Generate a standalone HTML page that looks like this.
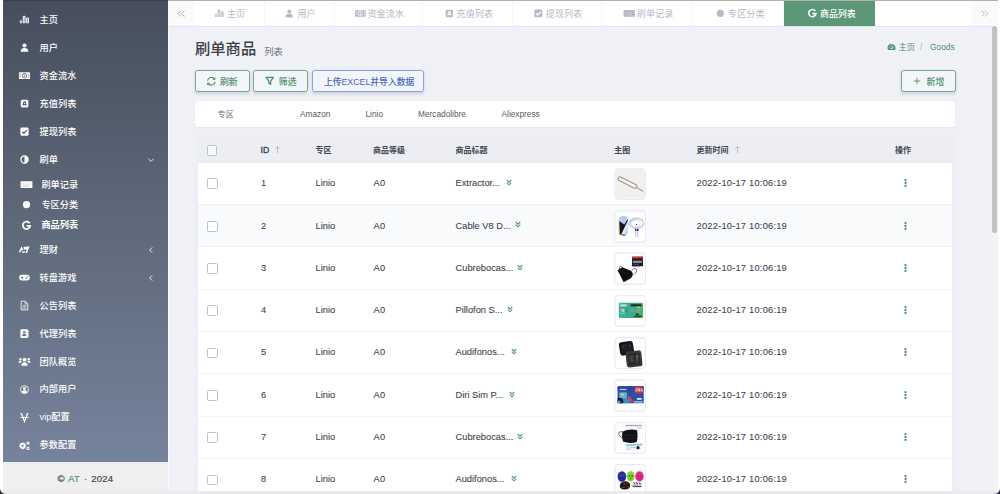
<!DOCTYPE html>
<html lang="zh-CN">
<head>
<meta charset="utf-8">
<title>刷单商品</title>
<style>
*{box-sizing:border-box;margin:0;padding:0}
html,body{width:1000px;height:494px;overflow:hidden;background:#fff}
body{position:relative;font-family:"Liberation Sans","Noto Sans CJK SC",sans-serif;font-size:8.9px;color:#414750}
svg{display:block}
i{font-style:normal;display:block}
#pagebg{position:absolute;left:168px;top:26px;width:823px;height:465px;background:#eff1f7}
#topl{position:absolute;left:3px;top:0;width:995px;height:1px;background:rgba(40,40,40,.36)}
#cbl{position:absolute;left:0;top:489px;width:5px;height:5px;background:radial-gradient(circle at 100% 0,rgba(40,30,25,0) 4.3px,#2b211c 5.2px)}
#cbr{position:absolute;left:995px;top:489px;width:5px;height:5px;background:radial-gradient(circle at 0 0,rgba(30,25,60,0) 4.3px,#241d4a 5.2px)}
/* sidebar */
#side{position:absolute;left:3px;top:0;width:165px;height:462.4px;background:linear-gradient(180deg,#464e5c 0%,#606b7c 53%,#76839c 100%)}
#side .it{position:absolute;left:0;width:165px;height:20px;color:#fff;font-size:9.2px;line-height:21px;font-weight:500}
#side .it .ic{position:absolute;left:15px;top:4.4px;width:13px;height:12px}
#side .it .tx{position:absolute;left:36.6px;top:0;white-space:nowrap}
#side .it.sub .tx{left:38.4px}
#side .it.sub .ic{left:17px}
#side .it.act .tx{font-weight:bold}
#side .it .ar{position:absolute;left:144.2px;top:6px;width:8px;height:8px}
#foot{position:absolute;left:3px;top:462.4px;width:165px;height:28.6px;background:#efefef;line-height:33.6px;font-size:9.6px;color:#4a4a4a;letter-spacing:.3px;-webkit-text-stroke:.2px}
#foot span,#foot b{position:absolute;top:0;white-space:nowrap}
#foot b{font-weight:normal;color:#4e9876}
/* tabs */
#tabs{position:absolute;left:168px;top:1px;width:830px;height:25.5px;background:#fff;border-bottom:1px solid #e4e6ec}
#tabs .tb{position:absolute;top:0;height:24.5px;border-right:1px solid #f5f6f8;color:#b4bac6;font-size:9.1px;line-height:26.4px;padding-left:1px;text-align:center;white-space:nowrap}
#tabs .tb svg{display:inline-block;vertical-align:-2.2px;margin-right:1.5px}
#tabs .tb.on{background:#5b9777;color:#fff;border-right:none;font-weight:500;font-size:8.9px;height:25.3px}
#tabs .nav{position:absolute;top:0;width:25.5px;height:24.5px;background:#fafafa}
#edge{position:absolute;left:168px;top:26px;width:1.4px;height:465px;background:rgba(255,255,255,.55)}
/* scroll */
#sbar{position:absolute;left:991px;top:26px;width:7px;height:465px;background:#f3f4f7}
#sbar i{position:absolute;left:.6px;top:0;width:5.8px;height:207px;border-radius:3px;background:#c2c2c2}
#botm{position:absolute;left:0;top:491px;width:1000px;height:3px;background:#ebebee}
/* content */
h1{position:absolute;left:195px;top:38.5px;font-size:15.3px;font-weight:500;color:#3b3f45;line-height:20px;white-space:nowrap}
h1 small{font-size:9.4px;color:#6c717a;margin-left:8px;font-weight:normal;position:relative;top:1px}
.bc{position:absolute;left:887px;top:40.5px;height:12px;width:80px;font-size:8.4px;line-height:12px;white-space:nowrap}
.bc svg{position:absolute;left:0;top:2px}
.bc span{position:absolute;top:0}
.bc .a{left:11.5px;color:#4e8f6f}
.bc .s{left:33px;color:#a8adb8}
.bc .g{left:43px;color:#4e8f6f}
.btn{position:absolute;top:70px;height:22px;border:1.15px solid #72a88c;border-radius:2.8px;background:#f4f5f8;color:#4e8f6f;font-size:8.9px;font-weight:500;line-height:19.8px;white-space:nowrap;box-shadow:0 1.5px 3px rgba(60,70,90,.18)}
.btn i{position:absolute}
.btn span{position:absolute;top:2.1px}
.btn.blue{border-color:#86a3e8;color:#3f66c8}
#filt{position:absolute;left:195px;top:100.5px;width:760px;height:26px;background:#fff;border-radius:2.5px;box-shadow:0 .5px 2px rgba(80,90,120,.06);font-size:8.3px;color:#555a62;line-height:26px}
#filt span{position:absolute;top:0;white-space:nowrap}
#card{position:absolute;left:195px;top:136.2px;width:760px;height:354.8px;background:#edeef3;border-radius:3px 3px 0 0;overflow:hidden}
#card .hd{position:absolute;left:0;top:0;width:760px;height:26.8px;font-weight:bold;font-size:8px;color:#414750;line-height:29.6px;background:#edeef3;z-index:2}
#card .hd span{position:absolute;top:0;white-space:nowrap}
#card .hd .up{position:absolute;top:9.2px}
.cb{position:absolute;width:10.8px;height:10.8px;border:1px solid #b9c3cd;border-radius:1.5px;background:#fff}
.row{position:absolute;left:3px;width:754px;height:42.3px;background:#fff;border-top:1px solid #f2f3f7;font-size:9.3px;color:#3f454e;line-height:41.6px;-webkit-text-stroke:.1px #3f454e}
.row.alt{background:#f9fafc}
.row span{position:absolute;top:0;white-space:nowrap}
.row .dt{letter-spacing:.22px}
.row .th{position:absolute;left:416.2px;top:5px;width:32px;height:32.4px;border:1.7px solid #e8ebf4;border-radius:4px;background:#f3f5fa;padding:.5px;overflow:hidden}
.row .th svg{width:100%;height:100%;border-radius:2.4px}
.row .dots{position:absolute;left:705.6px;top:15.4px;width:3px;height:10px}
.row .chev{position:absolute;top:16.3px;width:6px;height:7px}

</style>
</head>
<body>
<div id="pagebg"></div><div id="edge"></div>
<div id="side">
<div class="it " style="top:9.8px"><span class="ic"><svg width="13" height="11.14" viewBox="0 0 14 12" style=""><g fill="#fff"><rect x="2" y="6.7" width="2.3" height="3.4" rx="1"/><rect x="5.1" y="1.8" width="3" height="8.3" rx="1.3"/><rect x="8.8" y="3.7" width="3" height="6.4" rx="1.3"/></g><path d="M3.15 7.9v1.1M6.6 3.3v5.6M10.3 5.2v3.7" stroke="#474f5f" stroke-width=".75" stroke-linecap="round" opacity=".85"/></svg></span><span class="tx">主页</span></div>
<div class="it " style="top:37.8px"><span class="ic"><svg width="13" height="11.14" viewBox="0 0 14 12" style=""><circle cx="7" cy="3.8" r="2.2" fill="#fff"/><path d="M2.9 10.6c0-3 1.6-4.1 4.1-4.1s4.1 1.1 4.1 4.1z" fill="#fff"/></svg></span><span class="tx">用户</span></div>
<div class="it " style="top:65.8px"><span class="ic"><svg width="13" height="11.14" viewBox="0 0 14 12" style=""><rect x="1" y="2.5" width="12" height="7.2" rx=".9" fill="#fff"/><ellipse cx="7" cy="6.1" rx="2.3" ry="2.5" fill="none" stroke="#4d5668" stroke-width=".9"/><rect x="6.65" y="4.9" width=".7" height="2.4" fill="#4d5668"/><path d="M2.3 3.7v4.8M11.7 3.7v4.8" stroke="#4d5668" stroke-width=".5"/></svg></span><span class="tx">资金流水</span></div>
<div class="it " style="top:93.7px"><span class="ic"><svg width="13" height="11.14" viewBox="0 0 14 12" style=""><rect x="3" y="2" width="8.2" height="8.2" rx="1.5" fill="#fff"/><path d="M5.3 8.3 6.5 4.2h1.2L8.9 8.3M5.9 7.1h2.4" fill="none" stroke="#4f586a" stroke-width="1.15"/></svg></span><span class="tx">充值列表</span></div>
<div class="it " style="top:121.8px"><span class="ic"><svg width="13" height="11.14" viewBox="0 0 14 12" style=""><rect x="2.6" y="1.6" width="8.8" height="8.8" rx="1.5" fill="#fff"/><path d="M4.6 6.1 6.3 7.8 9.5 4.4" fill="none" stroke="#535c6f" stroke-width="1.4"/></svg></span><span class="tx">提现列表</span></div>
<div class="it " style="top:149.8px"><span class="ic"><svg width="13" height="11.14" viewBox="0 0 14 12" style=""><circle cx="7" cy="6" r="3.9" fill="none" stroke="#fff" stroke-width="1.3"/><path d="M7 2.1a3.9 3.9 0 0 1 0 7.8z" fill="#fff"/></svg></span><span class="tx">刷单</span><span class="ar"><svg width="8" height="8" viewBox="0 0 8 8" style=""><path d="M1.4 2.8 4 5.4 6.6 2.8" fill="none" stroke="#e9ecf1" stroke-width="1"/></svg></span></div>
<div class="it sub" style="top:174.6px"><span class="ic"><svg width="13" height="11.14" viewBox="0 0 14 12" style=""><rect x=".6" y="2.3" width="12.8" height="7.4" rx=".8" fill="#fff"/><path d="M2 4.7h10M2 6.1h10" stroke="#5a6478" stroke-width=".4" stroke-dasharray="1.1 .6" opacity=".55"/><path d="M3.6 7.8h6.8" stroke="#5a6478" stroke-width=".5" opacity=".6"/></svg></span><span class="tx">刷单记录</span></div>
<div class="it sub" style="top:194.9px"><span class="ic"><svg width="13" height="11.14" viewBox="0 0 14 12" style=""><circle cx="7" cy="6" r="3.95" fill="#fff"/></svg></span><span class="tx">专区分类</span></div>
<div class="it sub act" style="top:215.4px"><span class="ic"><svg width="13" height="11.14" viewBox="0 0 14 12" style=""><path d="M10.4 3.5A4 4 0 1 0 11 6.3H7.2" fill="none" stroke="#fff" stroke-width="1.8"/></svg></span><span class="tx">商品列表</span></div>
<div class="it " style="top:239.8px"><span class="ic"><svg width="13" height="11.14" viewBox="0 0 14 12" style=""><path d="M.8 8.8 3.7 2.4 6 6.6 3.4 7.1 2.6 8.9z" fill="#fff"/><path d="M5.8 3.3l6.7-.9-2.8 7.5-1.7-.6 1.5-3.5-3 .5z" fill="#fff"/><path d="M4.4 8.1l3.2-.4.3 1.6-3 .3z" fill="#fff"/></svg></span><span class="tx">理财</span><span class="ar"><svg width="8" height="8" viewBox="0 0 8 8" style=""><path d="M5.2 1.4 2.6 4 5.2 6.6" fill="none" stroke="#e9ecf1" stroke-width="1"/></svg></span></div>
<div class="it " style="top:267.8px"><span class="ic"><svg width="13" height="11.14" viewBox="0 0 14 12" style=""><rect x="1.3" y="3.1" width="11.4" height="6" rx="3" fill="#fff"/><path d="M3.1 6.1h2.6M4.4 4.8v2.6" stroke="#626d83" stroke-width=".9"/><circle cx="8.7" cy="6.8" r=".8" fill="#626d83"/><circle cx="10.3" cy="5.4" r=".8" fill="#626d83"/></svg></span><span class="tx">转盘游戏</span><span class="ar"><svg width="8" height="8" viewBox="0 0 8 8" style=""><path d="M5.2 1.4 2.6 4 5.2 6.6" fill="none" stroke="#e9ecf1" stroke-width="1"/></svg></span></div>
<div class="it " style="top:295.7px"><span class="ic"><svg width="13" height="11.14" viewBox="0 0 14 12" style=""><path d="M3.4 1.3h4.5l2.7 2.7v6.7H3.4z" fill="none" stroke="#fff" stroke-width=".9"/><path d="M7.7 1.5v2.7h2.7" fill="none" stroke="#fff" stroke-width=".8"/><path d="M5 5.8h4M5 7.3h4M5 8.8h4" stroke="#fff" stroke-width=".7"/></svg></span><span class="tx">公告列表</span></div>
<div class="it " style="top:323.6px"><span class="ic"><svg width="13" height="11.14" viewBox="0 0 14 12" style=""><rect x="2.6" y="1.3" width="8.2" height="9.4" rx="1" fill="#fff"/><path d="M11 3v1.6M11 5.4V7M11 7.8v1.6" stroke="#fff" stroke-width="1.2"/><circle cx="6.7" cy="4.7" r="1.35" fill="#6b7790"/><path d="M4.3 8.7c0-1.8 1-2.3 2.4-2.3s2.4.5 2.4 2.3z" fill="#6b7790"/></svg></span><span class="tx">代理列表</span></div>
<div class="it " style="top:351.5px"><span class="ic"><svg width="13" height="11.14" viewBox="0 0 14 12" style=""><circle cx="7" cy="4" r="2" fill="#fff"/><path d="M3.6 10.5c0-2.8 1.3-3.8 3.4-3.8s3.4 1 3.4 3.8z" fill="#fff"/><circle cx="2.6" cy="3.5" r="1.4" fill="#fff"/><circle cx="11.4" cy="3.5" r="1.4" fill="#fff"/><path d="M.6 7.3c0-1.6.8-2.2 2-2.2.8 0 1.4.2 1.7.7-.9.6-1.3 1.1-1.5 1.5zM13.4 7.3c0-1.6-.8-2.2-2-2.2-.8 0-1.4.2-1.7.7.9.6 1.3 1.1 1.5 1.5z" fill="#fff"/></svg></span><span class="tx">团队概览</span></div>
<div class="it " style="top:379.4px"><span class="ic"><svg width="13" height="11.14" viewBox="0 0 14 12" style=""><circle cx="7" cy="6" r="4.3" fill="none" stroke="#fff" stroke-width=".9"/><circle cx="7" cy="4.8" r="1.6" fill="#fff"/><path d="M4.1 8.9c.3-1.7 1.3-2.2 2.9-2.2s2.6.5 2.9 2.2c-.8.8-1.8 1.3-2.9 1.3s-2.1-.5-2.9-1.3z" fill="#fff"/></svg></span><span class="tx">内部用户</span></div>
<div class="it " style="top:407.4px"><span class="ic"><svg width="13" height="11.14" viewBox="0 0 14 12" style=""><path d="M3.7 1.6 7 10.2 10.3 1.6" fill="none" stroke="#fff" stroke-width="1.3"/><path d="M2.4 5.9h9.2" stroke="#fff" stroke-width="1"/><path d="M2.6 1.6h2M9.4 1.6h2" stroke="#fff" stroke-width=".9"/></svg></span><span class="tx">vip配置</span></div>
<div class="it " style="top:435.3px"><span class="ic"><svg width="13" height="11.14" viewBox="0 0 14 12" style=""><circle cx="5" cy="6.3" r="2.5" fill="none" stroke="#fff" stroke-width="1.7"/><path d="M5 2.6v7.4M1.3 6.3h7.4M2.4 3.7l5.2 5.2M7.6 3.7 2.4 8.9" stroke="#fff" stroke-width="1"/><circle cx="5" cy="6.3" r="1.1" fill="#7482a0"/><circle cx="10.8" cy="3.3" r="1.2" fill="none" stroke="#fff" stroke-width="1.1"/><circle cx="10.8" cy="9.1" r="1.2" fill="none" stroke="#fff" stroke-width="1.1"/></svg></span><span class="tx">参数配置</span></div>
</div>
<div id="foot"><span style="left:54.6px;letter-spacing:0">©</span><b style="left:65px;letter-spacing:0">AT</b><span style="left:81px">·</span><span style="left:88.2px;letter-spacing:.15px">2024</span></div>
<div id="tabs">
<div class="nav" style="left:0"><svg width="25" height="25" viewBox="0 0 25 25" style=""><path d="M13 9.5 10 12.5l3 3M16.4 9.5l-3 3 3 3" fill="none" stroke="#8f96a3" stroke-width=".8"/></svg></div>
<div class="tb " style="left:25.5px;width:71px"><svg width="12.6" height="10.8" viewBox="0 0 14 12" style=""><g fill="#b4bac6"><rect x="2" y="6.7" width="2.3" height="3.4" rx="1"/><rect x="5.1" y="1.8" width="3" height="8.3" rx="1.3"/><rect x="8.8" y="3.7" width="3" height="6.4" rx="1.3"/></g><path d="M3.15 7.9v1.1M6.6 3.3v5.6M10.3 5.2v3.7" stroke="#fff" stroke-width=".75" stroke-linecap="round" opacity=".85"/></svg>主页</div>
<div class="tb " style="left:96.5px;width:70px"><svg width="12.6" height="10.8" viewBox="0 0 14 12" style=""><circle cx="7" cy="3.8" r="2.2" fill="#b4bac6"/><path d="M2.9 10.6c0-3 1.6-4.1 4.1-4.1s4.1 1.1 4.1 4.1z" fill="#b4bac6"/></svg>用户</div>
<div class="tb " style="left:166.5px;width:88.5px"><svg width="12.6" height="10.8" viewBox="0 0 14 12" style=""><rect x="1" y="2.5" width="12" height="7.2" rx=".9" fill="#b4bac6"/><ellipse cx="7" cy="6.1" rx="2.3" ry="2.5" fill="none" stroke="#fff" stroke-width=".9"/><rect x="6.65" y="4.9" width=".7" height="2.4" fill="#fff"/><path d="M2.3 3.7v4.8M11.7 3.7v4.8" stroke="#fff" stroke-width=".5"/></svg>资金流水</div>
<div class="tb " style="left:255px;width:89.5px"><svg width="12.6" height="10.8" viewBox="0 0 14 12" style=""><rect x="3" y="2" width="8.2" height="8.2" rx="1.5" fill="#b4bac6"/><path d="M5.3 8.3 6.5 4.2h1.2L8.9 8.3M5.9 7.1h2.4" fill="none" stroke="#fff" stroke-width="1.15"/></svg>充值列表</div>
<div class="tb " style="left:344.5px;width:89px"><svg width="12.6" height="10.8" viewBox="0 0 14 12" style=""><rect x="2.6" y="1.6" width="8.8" height="8.8" rx="1.5" fill="#b4bac6"/><path d="M4.6 6.1 6.3 7.8 9.5 4.4" fill="none" stroke="#fff" stroke-width="1.4"/></svg>提现列表</div>
<div class="tb " style="left:433.5px;width:91px;padding-left:3px"><svg width="12.6" height="10.8" viewBox="0 0 14 12" style=""><rect x=".6" y="2.3" width="12.8" height="7.4" rx=".8" fill="#b4bac6"/><path d="M2 4.7h10M2 6.1h10" stroke="#fff" stroke-width=".4" stroke-dasharray="1.1 .6" opacity=".55"/><path d="M3.6 7.8h6.8" stroke="#fff" stroke-width=".5" opacity=".6"/></svg>刷单记录</div>
<div class="tb " style="left:524.5px;width:91.5px;padding-left:3px"><svg width="12.6" height="10.8" viewBox="0 0 14 12" style=""><circle cx="7" cy="6" r="3.95" fill="#b4bac6"/></svg>专区分类</div>
<div class="tb on" style="left:616px;width:91px;padding-left:2.5px"><svg width="12.6" height="10.8" viewBox="0 0 14 12" style=""><path d="M10.4 3.5A4 4 0 1 0 11 6.3H7.2" fill="none" stroke="#fff" stroke-width="1.8"/></svg>商品列表</div>
<div class="nav" style="left:804px;width:26px"><svg width="25" height="25" viewBox="0 0 25 25" style=""><path d="M9.5 9.5l3 3-3 3M12.9 9.5l3 3-3 3" fill="none" stroke="#a9aeb9" stroke-width=".8"/></svg></div>
</div>
<h1>刷单商品<small>列表</small></h1>
<div class="bc"><svg width="9" height="8" viewBox="0 0 18 16" style=""><path d="M9 2a8 8 0 0 0-8 8c0 1.5.4 2.8 1.1 4h13.8A8 8 0 0 0 9 2z" fill="#4e8f6f"/><circle cx="9" cy="10.5" r="1.7" fill="#eff1f7"/><path d="M9.3 10.3 12.5 5.6" stroke="#eff1f7" stroke-width="1.3"/><circle cx="4.3" cy="9.5" r="1" fill="#eff1f7"/><circle cx="5.8" cy="6" r="1" fill="#eff1f7"/><circle cx="9" cy="4.5" r="1" fill="#eff1f7"/><circle cx="13.7" cy="9.5" r="1" fill="#eff1f7"/></svg><span class="a">主页</span><span class="s">/</span><span class="g">Goods</span></div>
<div class="btn" style="left:195px;width:54.5px"><i style="left:9.8px;top:4.6px"><svg width="10.5" height="10.5" viewBox="0 0 12 12" style=""><g transform="matrix(-1 0 0 1 12 0)"><path d="M10.3 5.2A4.4 4.4 0 0 0 2.4 3.5M1.7 6.8a4.4 4.4 0 0 0 7.9 1.7" fill="none" stroke="#4e8f6f" stroke-width="1.3"/><path d="M.8 1.5 1.7 4.7 4.9 3.9zM11.2 10.5 10.3 7.3 7.1 8.1z" fill="#4e8f6f"/></g></svg></i><span style="left:23.9px">刷新</span></div>
<div class="btn" style="left:253.3px;width:54.3px"><i style="left:10.7px;top:5.2px"><svg width="9.5" height="9.5" viewBox="0 0 12 12" style=""><path d="M1.3 1.8h9.4L7.2 6.2v4.3L4.8 9V6.2z" fill="none" stroke="#4e8f6f" stroke-width="1.6" stroke-linejoin="round"/></svg></i><span style="left:24.5px">筛选</span></div>
<div class="btn blue" style="left:311.7px;width:112.2px"><span style="left:11.2px;font-size:8.8px">上传EXCEL并导入数据</span></div>
<div class="btn" style="left:901px;width:54.5px"><i style="left:11px;top:6px"><svg width="8" height="8" viewBox="0 0 8 8" style=""><path d="M4 .8v6.4M.8 4h6.4" stroke="#4e8f6f" stroke-width=".9"/></svg></i><span style="left:24.6px">新增</span></div>
<div id="filt"><span style="left:22.5px;color:#6c717a">专区</span><span style="left:105px">Amazon</span><span style="left:170.5px">Linio</span><span style="left:223px">Mercadolibre</span><span style="left:306.5px">Aliexpress</span></div>
<div id="card"><div class="hd"><i class="cb" style="left:11.6px;top:9.3px;background:#f6f7fb"></i><span style="left:65.5px;font-size:8.7px;font-weight:normal;-webkit-text-stroke:.35px #414750">ID</span><i class="up" style="left:79.3px"><svg width="7" height="9" viewBox="0 0 7 9" style=""><path d="M3.5 8V1.7M1.3 3.7 3.5 1.5 5.7 3.7" fill="none" stroke="#a9aeb9" stroke-width=".75"/></svg></i><span style="left:120.5px">专区</span><span style="left:178px">商品等级</span><span style="left:260.5px">商品标题</span><span style="left:419.3px">主图</span><span style="left:501.5px">更新时间</span><i class="up" style="left:539.3px"><svg width="7" height="9" viewBox="0 0 7 9" style=""><path d="M3.5 8V1.7M1.3 3.7 3.5 1.5 5.7 3.7" fill="none" stroke="#a9aeb9" stroke-width=".75"/></svg></i><span style="left:700px">操作</span></div>
<div class="row" style="top:25.7px"><i class="cb" style="left:9.1px;top:15.6px"></i><span style="left:63px">1</span><span style="left:117.5px">Linio</span><span style="left:175.6px;letter-spacing:.2px">A0</span><span style="left:257.5px">Extractor...</span><i class="chev" style="left:307.5px"><svg width="6" height="7" viewBox="0 0 6 7" style=""><path d="M.7 1 3 3.1 5.3 1M.7 3.7 3 5.8 5.3 3.7" fill="none" stroke="#5a9b7b" stroke-width="1.15"/></svg></i><div class="th"><svg width="28" height="28" viewBox="0 0 28 28" style=""><rect width="28" height="28" fill="#f1f0ee"/><rect x="1.2" y="11.1" width="19.6" height="3.7" rx="1.85" transform="rotate(26.7 11.05 12.95)" fill="#f7f6f4" stroke="#9f9885" stroke-width="1.05"/><path d="M19.6 17.3 26 21.3" stroke="#9f9885" stroke-width="1.05" stroke-linecap="round"/></svg></div><span class="dt" style="left:498.5px">2022-10-17 10:06:19</span><i class="dots"><svg width="3" height="10" viewBox="0 0 3 10" style=""><circle cx="1.5" cy="2.1" r="1.15" fill="#4e8f6f"/><circle cx="1.5" cy="5" r="1.15" fill="#4e8f6f"/><circle cx="1.5" cy="7.9" r="1.15" fill="#4e8f6f"/></svg></i></div>
<div class="row alt" style="top:68px;line-height:42.4px"><i class="cb" style="left:9.1px;top:15.6px"></i><span style="left:63px">2</span><span style="left:117.5px">Linio</span><span style="left:175.6px;letter-spacing:.2px">A0</span><span style="left:257.5px">Cable V8 D...</span><i class="chev" style="left:317px"><svg width="6" height="7" viewBox="0 0 6 7" style=""><path d="M.7 1 3 3.1 5.3 1M.7 3.7 3 5.8 5.3 3.7" fill="none" stroke="#5a9b7b" stroke-width="1.15"/></svg></i><div class="th"><svg width="28" height="28" viewBox="0 0 28 28" style=""><rect width="28" height="28" fill="#fff"/><path d="M3.2 5.5c1-2 6-2.6 7.7-.3l.6 15.8-7.5.9z" fill="#b7cdee"/><path d="M3 8.5 3.6 21.8 7 21.5 11.5 9.5 11.3 6.5 8 12z" fill="#15171c"/><path d="M5 21.5 11.4 8 11.5 13 8.5 21.3z" fill="#dfe8f7"/><path d="M3 7v15" stroke="#c8a25a" stroke-width=".6"/><path d="M6 21.6l3-.2.3 1.3-3 .3z" fill="#3d67c1"/><ellipse cx="19.8" cy="10.6" rx="6.8" ry="4.7" fill="none" stroke="#cfd3ef" stroke-width="1.9"/><ellipse cx="19" cy="10.9" rx="4.5" ry="2.8" fill="none" stroke="#dfe2f5" stroke-width="1"/><path d="M12.6 12.5c1-4 4-6.5 8-6.3" fill="none" stroke="#c3c7e8" stroke-width="1.2"/><rect x="18.3" y="16" width="1.5" height="2.3" fill="#3a3d48"/><rect x="20.3" y="16" width="1.5" height="2.3" fill="#3a3d48"/><path d="M19 18.5v5.2M21 18.5v5.6" stroke="#c9cde6" stroke-width="1.3"/><circle cx="19.8" cy="11.7" r=".6" fill="#3a3d48"/></svg></div><span class="dt" style="left:498.5px">2022-10-17 10:06:19</span><i class="dots"><svg width="3" height="10" viewBox="0 0 3 10" style=""><circle cx="1.5" cy="2.1" r="1.15" fill="#4e8f6f"/><circle cx="1.5" cy="5" r="1.15" fill="#4e8f6f"/><circle cx="1.5" cy="7.9" r="1.15" fill="#4e8f6f"/></svg></i></div>
<div class="row" style="top:110.3px;line-height:42.4px"><i class="cb" style="left:9.1px;top:15.6px"></i><span style="left:63px">3</span><span style="left:117.5px">Linio</span><span style="left:175.6px;letter-spacing:.2px">A0</span><span style="left:257.5px">Cubrebocas...</span><i class="chev" style="left:319px"><svg width="6" height="7" viewBox="0 0 6 7" style=""><path d="M.7 1 3 3.1 5.3 1M.7 3.7 3 5.8 5.3 3.7" fill="none" stroke="#5a9b7b" stroke-width="1.15"/></svg></i><div class="th"><svg width="28" height="28" viewBox="0 0 28 28" style=""><rect width="28" height="28" fill="#fff"/><path d="M15.4 2.5l10.5-.1.2 9.3-10.6.3z" fill="#1c1d22"/><path d="M15.4 2.4l10.5-.1v1.7l-10.5.2z" fill="#c8302c"/><rect x="16.3" y="6.3" width="8.7" height="2.1" fill="#8d9098"/><rect x="16.3" y="9.3" width="6" height="1" fill="#4a4c54"/><path d="M1.5 15.6 6 12.7 14.3 16c1.3 1 1.9 2.2 1.9 3.3-.2 1.7-.9 3-2 4L7.4 27z" fill="#0f1013"/><path d="M3.4 14.2c-.3-1.3.2-2.3 1-2.3.9 0 1.8.500 2.2 1.3" fill="none" stroke="#2b2c31" stroke-width=".7"/><path d="M15.4 15.8c.5-2 2.5-2.6 4-1.5 1.3 1.1.3 4-2.3 5.6" fill="none" stroke="#3a3b41" stroke-width=".7"/><path d="M5 16.5l7 2.5" stroke="#2a2b30" stroke-width=".5"/></svg></div><span class="dt" style="left:498.5px">2022-10-17 10:06:19</span><i class="dots"><svg width="3" height="10" viewBox="0 0 3 10" style=""><circle cx="1.5" cy="2.1" r="1.15" fill="#4e8f6f"/><circle cx="1.5" cy="5" r="1.15" fill="#4e8f6f"/><circle cx="1.5" cy="7.9" r="1.15" fill="#4e8f6f"/></svg></i></div>
<div class="row" style="top:152.6px"><i class="cb" style="left:9.1px;top:15.6px"></i><span style="left:63px">4</span><span style="left:117.5px">Linio</span><span style="left:175.6px;letter-spacing:.2px">A0</span><span style="left:257.5px">Pillofon S...</span><i class="chev" style="left:309px"><svg width="6" height="7" viewBox="0 0 6 7" style=""><path d="M.7 1 3 3.1 5.3 1M.7 3.7 3 5.8 5.3 3.7" fill="none" stroke="#5a9b7b" stroke-width="1.15"/></svg></i><div class="th"><svg width="28" height="28" viewBox="0 0 28 28" style=""><rect width="28" height="28" fill="#fff"/><defs><linearGradient id="gc1" x1="0" x2="1"><stop offset="0" stop-color="#3fb0a9"/><stop offset=".55" stop-color="#3fa58f"/><stop offset="1" stop-color="#55b25f"/></linearGradient></defs><rect x="2.7" y="6.3" width="23.4" height="14.7" rx=".9" fill="url(#gc1)"/><rect x="4" y="8" width="6.3" height="1.8" fill="#d9f1ee" opacity=".85"/><rect x="14.2" y="7.8" width="10.3" height="2" fill="#15301f"/><rect x="20" y="10" width="3.5" height=".9" fill="#e9d6a0"/><rect x="5.2" y="12.3" width="3" height="2.6" rx=".6" fill="#e6d56d"/><path d="M9.2 11.6c1.6 1 1.6 3.2 0 4.2" fill="none" stroke="#2d8a3c" stroke-width="1.1"/><rect x="4" y="16" width="5" height="1" fill="#8fd6cd" opacity=".8"/><circle cx="15.5" cy="13.5" r="1.4" fill="none" stroke="#7fd0bd" stroke-width=".5"/><circle cx="21.5" cy="14" r="1.7" fill="none" stroke="#8bd08a" stroke-width=".5"/><rect x="19.3" y="16.7" width="2.6" height="1.6" fill="#12261a"/><rect x="17.8" y="18.7" width="7" height="1.5" fill="#1c4a33"/></svg></div><span class="dt" style="left:498.5px">2022-10-17 10:06:19</span><i class="dots"><svg width="3" height="10" viewBox="0 0 3 10" style=""><circle cx="1.5" cy="2.1" r="1.15" fill="#4e8f6f"/><circle cx="1.5" cy="5" r="1.15" fill="#4e8f6f"/><circle cx="1.5" cy="7.9" r="1.15" fill="#4e8f6f"/></svg></i></div>
<div class="row" style="top:194.9px"><i class="cb" style="left:9.1px;top:15.6px"></i><span style="left:63px">5</span><span style="left:117.5px">Linio</span><span style="left:175.6px;letter-spacing:.2px">A0</span><span style="left:257.5px">Audifonos...</span><i class="chev" style="left:312.5px"><svg width="6" height="7" viewBox="0 0 6 7" style=""><path d="M.7 1 3 3.1 5.3 1M.7 3.7 3 5.8 5.3 3.7" fill="none" stroke="#5a9b7b" stroke-width="1.15"/></svg></i><div class="th"><svg width="28" height="28" viewBox="0 0 28 28" style=""><rect width="28" height="28" fill="#fff"/><rect x="3.4" y="2.3" width="13.6" height="13" rx="2.6" transform="rotate(-9 10 9)" fill="#131417"/><rect x="5.3" y="4.3" width="9.7" height="9" rx="1.5" transform="rotate(-9 10 9)" fill="#1f2024"/><circle cx="7.3" cy="7.3" r="1" fill="#3a3b40"/><circle cx="13.7" cy="6.3" r="1" fill="#3a3b40"/><rect x="9.8" y="11.3" width="15.2" height="15.5" rx="2.6" transform="rotate(-6 17.4 19)" fill="#3a3839"/><rect x="11.8" y="13.5" width="11.2" height="11.5" rx="1.5" transform="rotate(-6 17.4 19)" fill="#2a2829"/><path d="M13 16.5h4M13 18.8h4M13.3 21h4" stroke="#5c5859" stroke-width="1.1"/><rect x="19.3" y="14.5" width="2.3" height="8.5" rx="1" fill="#4a4748"/><rect x="19.9" y="16" width="1" height="1.6" fill="#9a9a55"/></svg></div><span class="dt" style="left:498.5px">2022-10-17 10:06:19</span><i class="dots"><svg width="3" height="10" viewBox="0 0 3 10" style=""><circle cx="1.5" cy="2.1" r="1.15" fill="#4e8f6f"/><circle cx="1.5" cy="5" r="1.15" fill="#4e8f6f"/><circle cx="1.5" cy="7.9" r="1.15" fill="#4e8f6f"/></svg></i></div>
<div class="row" style="top:237.2px;line-height:42.4px"><i class="cb" style="left:9.1px;top:15.6px"></i><span style="left:63px">6</span><span style="left:117.5px">Linio</span><span style="left:175.6px;letter-spacing:.2px">A0</span><span style="left:257.5px">Diri Sim P...</span><i class="chev" style="left:310.5px"><svg width="6" height="7" viewBox="0 0 6 7" style=""><path d="M.7 1 3 3.1 5.3 1M.7 3.7 3 5.8 5.3 3.7" fill="none" stroke="#5a9b7b" stroke-width="1.15"/></svg></i><div class="th"><svg width="28" height="28" viewBox="0 0 28 28" style=""><rect width="28" height="28" fill="#fff"/><defs><clipPath id="cc2"><rect x="1.5" y="5" width="25.3" height="16.3" rx=".9"/></clipPath></defs><g clip-path="url(#cc2)"><rect x="1" y="4.5" width="27" height="18" fill="#2a50a8"/><rect x="1" y="4.5" width="27" height="4.5" fill="#27489a"/><rect x="3.2" y="10.8" width="7.3" height="6" fill="#62b5c9"/><rect x="3.2" y="16.8" width="10" height="5.5" fill="#4aa7b9" opacity=".75"/><rect x="4.9" y="12" width="2.5" height="1.7" rx=".4" fill="#e8d25a"/><circle cx="22" cy="8.2" r="4.1" fill="#cf2f3b"/><path d="M18.8 7.3c1-.9 2-.5 1.5.6l-1.5 1.6h2M22 6.8l-.9 2h1.8M22.6 6.8v3.4M24.3 6.8v3.2M24.3 8.4c.8-.5 1.6-.3 1.6.6v1" fill="none" stroke="#fff" stroke-width=".65"/><path d="M11.5 15c1.5-1.2 3 .3 3.3 1.7.3 1.3 1.8 1.5 2.2 3-.9 1.2-2.8.6-3.9-.8-1.1-1.3-2.1-2.5-1.6-3.9z" fill="#e0434d"/><circle cx="3.5" cy="19.5" r="3.5" fill="#111f4d"/><circle cx="2.9" cy="20.2" r="1.5" fill="#3fb6b0"/><rect x="3.6" y="7.4" width="6.5" height="1.2" fill="#dfe8fa" opacity=".85"/><rect x="20.2" y="16.3" width="4.6" height="1.6" fill="#eef2fb"/><rect x="17.4" y="19.2" width="8.2" height="1.6" fill="#9fb5e6"/></g></svg></div><span class="dt" style="left:498.5px">2022-10-17 10:06:19</span><i class="dots"><svg width="3" height="10" viewBox="0 0 3 10" style=""><circle cx="1.5" cy="2.1" r="1.15" fill="#4e8f6f"/><circle cx="1.5" cy="5" r="1.15" fill="#4e8f6f"/><circle cx="1.5" cy="7.9" r="1.15" fill="#4e8f6f"/></svg></i></div>
<div class="row" style="top:279.5px"><i class="cb" style="left:9.1px;top:15.6px"></i><span style="left:63px">7</span><span style="left:117.5px">Linio</span><span style="left:175.6px;letter-spacing:.2px">A0</span><span style="left:257.5px">Cubrebocas...</span><i class="chev" style="left:319px"><svg width="6" height="7" viewBox="0 0 6 7" style=""><path d="M.7 1 3 3.1 5.3 1M.7 3.7 3 5.8 5.3 3.7" fill="none" stroke="#5a9b7b" stroke-width="1.15"/></svg></i><div class="th"><svg width="28" height="28" viewBox="0 0 28 28" style=""><rect width="28" height="28" fill="#fff"/><rect x="9" y="1.6" width="16" height="1.3" fill="#a4a7b0"/><rect x="20.5" y="3.9" width="4.5" height="1" fill="#c3c5cc"/><path d="M6.3 8.3c4-2.4 10.5-2.6 14-1.5.8 3.5.6 8-.3 11.3-4 1.5-9.5 1.1-13.2-.4-1-3-1.2-6.6-.5-9.4z" fill="#121316"/><path d="M6.5 11.5c4 .9 10 .6 14-.5M6.5 14.5c4 .9 10 .6 14-.5" fill="none" stroke="#2b2c31" stroke-width=".5"/><path d="M6.6 8.5c-2.8-.9-4.4.4-3.6 2.5.7 1.8 2.1 2.7 3.7 3.2" fill="none" stroke="#1b1c20" stroke-width=".7"/><path d="M9.3 20.5l16.2-.8v6l-16.2.8z" fill="#eef2fa"/><path d="M9.3 20.5l16.2-.8v1.5l-16.2.8z" fill="#86cbdc"/><rect x="10.2" y="22.6" width="3.6" height="2.8" fill="#cfe0f4"/><circle cx="15.4" cy="23.2" r=".7" fill="#f0a04a"/><rect x="16.5" y="22.8" width="3" height="1" fill="#b9c9e6"/><circle cx="21.3" cy="23.6" r="1.5" fill="#17181c"/></svg></div><span class="dt" style="left:498.5px">2022-10-17 10:06:19</span><i class="dots"><svg width="3" height="10" viewBox="0 0 3 10" style=""><circle cx="1.5" cy="2.1" r="1.15" fill="#4e8f6f"/><circle cx="1.5" cy="5" r="1.15" fill="#4e8f6f"/><circle cx="1.5" cy="7.9" r="1.15" fill="#4e8f6f"/></svg></i></div>
<div class="row" style="top:321.8px"><i class="cb" style="left:9.1px;top:15.6px"></i><span style="left:63px">8</span><span style="left:117.5px">Linio</span><span style="left:175.6px;letter-spacing:.2px">A0</span><span style="left:257.5px">Audifonos...</span><i class="chev" style="left:312.5px"><svg width="6" height="7" viewBox="0 0 6 7" style=""><path d="M.7 1 3 3.1 5.3 1M.7 3.7 3 5.8 5.3 3.7" fill="none" stroke="#5a9b7b" stroke-width="1.15"/></svg></i><div class="th"><svg width="28" height="28" viewBox="0 0 28 28" style=""><rect width="28" height="28" fill="#fff"/><ellipse cx="5.7" cy="11" rx="4.2" ry="5.1" fill="#1f2d9c"/><ellipse cx="14.2" cy="10.6" rx="3.8" ry="5.1" fill="#7fd42f"/><ellipse cx="22.7" cy="10.8" rx="4.1" ry="4.9" fill="#e42a86"/><circle cx="4.6" cy="10" r=".9" fill="#46508f"/><circle cx="7.2" cy="10" r=".9" fill="#46508f"/><path d="M5 13h2" stroke="#0f1860" stroke-width=".8"/><circle cx="13" cy="10.5" r=".9" fill="#3e6a28"/><circle cx="15.5" cy="10.5" r=".9" fill="#3e6a28"/><path d="M13.3 13h2" stroke="#3b7a14" stroke-width=".8"/><circle cx="21.5" cy="10.6" r=".9" fill="#7d3a5e"/><circle cx="24" cy="10.6" r=".9" fill="#7d3a5e"/><path d="M21.8 13h2" stroke="#9b1658" stroke-width=".8"/><path d="M3.7 19.5c.5-3 3.5-4.3 6-3.9 2.4.4 4.3 2 4 4.5-.3 2.4-2.5 3.3-5.3 3.3-2.7 0-5.1-1.3-4.7-3.9z" fill="#16171a"/><path d="M6.5 16.8l2.5 1.5M9.5 16.3l1.8 2M5.5 21l3 .6M10.5 20.5l2 .8" stroke="#d22d2d" stroke-width=".9"/><path d="M14.7 19c.5-2.6 3.3-3.7 5.7-3.4 2.6.3 5 1.7 5.1 3.9.1 2-2.3 2.7-5.3 2.7s-5.9-.8-5.5-3.2z" fill="#e9e9ee"/><path d="M17 16.5l1.6 2M20 16.2l.6 2.5M22.8 16.8l.7 2M16 20.2l8.5.3" stroke="#1d1e22" stroke-width=".95"/></svg></div><span class="dt" style="left:498.5px">2022-10-17 10:06:19</span><i class="dots"><svg width="3" height="10" viewBox="0 0 3 10" style=""><circle cx="1.5" cy="2.1" r="1.15" fill="#4e8f6f"/><circle cx="1.5" cy="5" r="1.15" fill="#4e8f6f"/><circle cx="1.5" cy="7.9" r="1.15" fill="#4e8f6f"/></svg></i></div></div>
<div id="sbar"><i></i></div>
<div id="botm"></div>
<div id="topl"></div><div id="cbl"></div><div id="cbr"></div>
</body>
</html>
